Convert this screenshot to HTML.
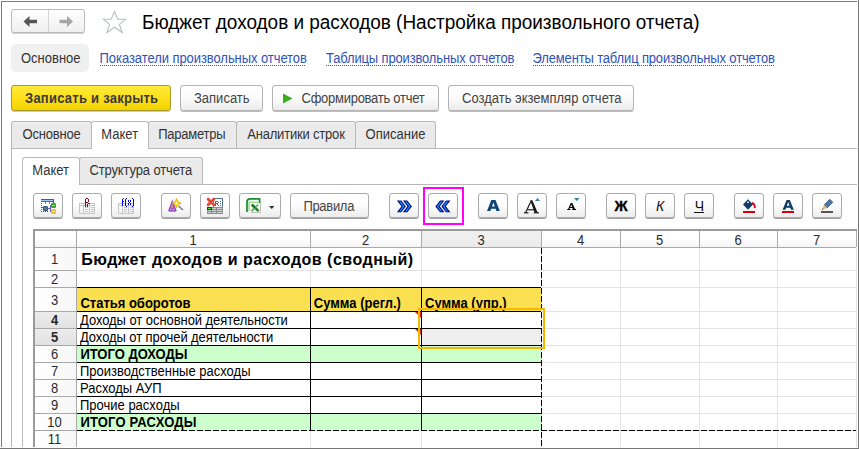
<!DOCTYPE html>
<html><head><meta charset="utf-8"><style>
html,body{margin:0;padding:0;}
body{width:859px;height:449px;position:relative;overflow:hidden;background:#fff;font-family:"Liberation Sans",sans-serif;}
.t{position:absolute;white-space:nowrap;}
</style></head><body>
<div style="position:absolute;left:1px;top:1px;width:856px;height:1px;background:#7b7b7b;"></div>
<div style="position:absolute;left:1px;top:1px;width:1px;height:446px;background:#7b7b7b;"></div>
<div style="position:absolute;left:858px;top:0px;width:1px;height:449px;background:#777;"></div>
<div style="position:absolute;left:0px;top:448px;width:859px;height:1px;background:#777;"></div>
<div style="position:absolute;left:11px;top:9px;width:74px;height:24px;box-sizing:border-box;border:1px solid #b9b9b9;border-radius:3px;background:linear-gradient(#fefefe,#f0f0f0);box-shadow:0 1px 0 #d0d0d0;"></div>
<div style="position:absolute;left:48px;top:10px;width:1px;height:22px;background:#d4d4d4;"></div>
<svg style="position:absolute;left:0;top:0" width="859" height="60"><path d="M23.5 21.5 L29.5 16 V19.8 H37 V23.2 H29.5 V27 Z" fill="#555"/><path d="M73 21.5 L67 16 V19.8 H59.5 V23.2 H67 V27 Z" fill="#a6a6a6"/><path d="M114.5 11.5 L117.8 19.3 L125.6 19.3 L119.4 24.4 L122.2 32.5 L114.5 27.2 L106.8 32.5 L109.6 24.4 L103.4 19.3 L111.2 19.3 Z" fill="none" stroke="#b9bfc6" stroke-width="1.1"/></svg>
<div class="t" style="left:142px;top:13px;font-size:19px;line-height:19px;color:#000;font-weight:400;transform:scaleY(1.08);transform-origin:0 16px;letter-spacing:-0.03px;">Бюджет доходов и расходов (Настройка произвольного отчета)</div>
<div style="position:absolute;left:11px;top:44px;width:78px;height:28px;background:#f0f0f0;border-radius:5px;"></div>
<div class="t" style="left:21px;top:52px;font-size:13px;line-height:13px;color:#333;font-weight:400;transform:scaleY(1.1);transform-origin:0 11px;">Основное</div>
<div class="t" style="left:99.6px;top:52px;font-size:13px;line-height:13px;color:#2f52b8;font-weight:400;transform:scaleY(1.1);transform-origin:0 11px;letter-spacing:-0.07px;">Показатели произвольных отчетов</div>
<div style="position:absolute;left:99.6px;top:65px;width:206px;height:1px;background:repeating-linear-gradient(90deg,#2f52b8 0 1px,transparent 1px 2px);"></div>
<div class="t" style="left:326px;top:52px;font-size:13px;line-height:13px;color:#2f52b8;font-weight:400;transform:scaleY(1.1);transform-origin:0 11px;letter-spacing:-0.15px;">Таблицы произвольных отчетов</div>
<div style="position:absolute;left:326px;top:65px;width:187px;height:1px;background:repeating-linear-gradient(90deg,#2f52b8 0 1px,transparent 1px 2px);"></div>
<div class="t" style="left:532.5px;top:52px;font-size:13px;line-height:13px;color:#2f52b8;font-weight:400;transform:scaleY(1.1);transform-origin:0 11px;letter-spacing:-0.15px;">Элементы таблиц произвольных отчетов</div>
<div style="position:absolute;left:532.5px;top:65px;width:241px;height:1px;background:repeating-linear-gradient(90deg,#2f52b8 0 1px,transparent 1px 2px);"></div>
<div style="position:absolute;left:11px;top:85px;width:160px;height:26px;box-sizing:border-box;border:1px solid #a99a2a;border-radius:3px;background:linear-gradient(#ffea3a 0%,#ffe01a 50%,#f2d200 100%);box-shadow:0 1px 0 #c9c9c9;"></div>
<div class="t" style="left:25px;top:92px;font-size:13px;line-height:13px;color:#3a3a3a;font-weight:700;transform:scaleY(1.1);transform-origin:0 11px;letter-spacing:0.25px;">Записать и закрыть</div>
<div style="position:absolute;left:180px;top:85px;width:83px;height:26px;box-sizing:border-box;border:1px solid #b3b3b3;border-radius:3px;background:linear-gradient(#ffffff 0%,#fbfbfb 50%,#ececec 100%);box-shadow:0 1px 0 #bdbdbd;"></div>
<div class="t" style="left:194px;top:92px;font-size:13px;line-height:13px;color:#444;font-weight:400;transform:scaleY(1.1);transform-origin:0 11px;">Записать</div>
<div style="position:absolute;left:272px;top:85px;width:167px;height:26px;box-sizing:border-box;border:1px solid #b3b3b3;border-radius:3px;background:linear-gradient(#ffffff 0%,#fbfbfb 50%,#ececec 100%);box-shadow:0 1px 0 #bdbdbd;"></div>
<svg style="position:absolute;left:282px;top:93px" width="12" height="12"><path d="M1 0.5 L10.5 5.5 L1 10.5 Z" fill="#3cae1e"/></svg>
<div class="t" style="left:301.5px;top:92px;font-size:13px;line-height:13px;color:#444;font-weight:400;transform:scaleY(1.1);transform-origin:0 11px;letter-spacing:-0.26px;">Сформировать отчет</div>
<div style="position:absolute;left:448px;top:85px;width:186px;height:26px;box-sizing:border-box;border:1px solid #b3b3b3;border-radius:3px;background:linear-gradient(#ffffff 0%,#fbfbfb 50%,#ececec 100%);box-shadow:0 1px 0 #bdbdbd;"></div>
<div class="t" style="left:462px;top:92px;font-size:13px;line-height:13px;color:#444;font-weight:400;transform:scaleY(1.1);transform-origin:0 11px;">Создать экземпляр отчета</div>
<div style="position:absolute;left:11px;top:148px;width:846px;height:1px;background:#b9b9b9;"></div>
<div style="position:absolute;left:11px;top:121px;width:81px;height:27px;box-sizing:border-box;border:1px solid #b9b9b9;border-bottom:none;border-radius:3px 3px 0 0;background:linear-gradient(#f1f1f1 0,#eaeaea 3px);"></div>
<div class="t" style="left:22.5px;top:128px;font-size:13px;line-height:13px;color:#333;font-weight:400;transform:scaleY(1.1);transform-origin:0 11px;letter-spacing:-0.18px;">Основное</div>
<div style="position:absolute;left:148px;top:121px;width:89px;height:27px;box-sizing:border-box;border:1px solid #b9b9b9;border-bottom:none;border-radius:3px 3px 0 0;background:linear-gradient(#f1f1f1 0,#eaeaea 3px);"></div>
<div class="t" style="left:158.2px;top:128px;font-size:13px;line-height:13px;color:#333;font-weight:400;transform:scaleY(1.1);transform-origin:0 11px;letter-spacing:-0.24px;">Параметры</div>
<div style="position:absolute;left:236px;top:121px;width:120px;height:27px;box-sizing:border-box;border:1px solid #b9b9b9;border-bottom:none;border-radius:3px 3px 0 0;background:linear-gradient(#f1f1f1 0,#eaeaea 3px);"></div>
<div class="t" style="left:247.2px;top:128px;font-size:13px;line-height:13px;color:#333;font-weight:400;transform:scaleY(1.1);transform-origin:0 11px;letter-spacing:-0.19px;">Аналитики строк</div>
<div style="position:absolute;left:355px;top:121px;width:81px;height:27px;box-sizing:border-box;border:1px solid #b9b9b9;border-bottom:none;border-radius:3px 3px 0 0;background:linear-gradient(#f1f1f1 0,#eaeaea 3px);"></div>
<div class="t" style="left:365.6px;top:128px;font-size:13px;line-height:13px;color:#333;font-weight:400;transform:scaleY(1.1);transform-origin:0 11px;letter-spacing:0px;">Описание</div>
<div style="position:absolute;left:91px;top:121px;width:58px;height:28px;box-sizing:border-box;border:1px solid #b9b9b9;border-bottom:none;border-radius:3px 3px 0 0;background:#ffffff;"></div>
<div class="t" style="left:101.3px;top:128px;font-size:13px;line-height:13px;color:#333;font-weight:400;transform:scaleY(1.1);transform-origin:0 11px;letter-spacing:0px;">Макет</div>
<div style="position:absolute;left:11px;top:148px;width:1px;height:299px;background:#b9b9b9;"></div>
<div style="position:absolute;left:22px;top:184px;width:835px;height:1px;background:#b9b9b9;"></div>
<div style="position:absolute;left:79px;top:157px;width:124px;height:27px;box-sizing:border-box;border:1px solid #b9b9b9;border-bottom:none;border-radius:3px 3px 0 0;background:linear-gradient(#f1f1f1 0,#eaeaea 3px);"></div>
<div class="t" style="left:89.4px;top:164px;font-size:13px;line-height:13px;color:#333;font-weight:400;transform:scaleY(1.1);transform-origin:0 11px;letter-spacing:-0.13px;">Структура отчета</div>
<div style="position:absolute;left:22px;top:157px;width:58px;height:28px;box-sizing:border-box;border:1px solid #b9b9b9;border-bottom:none;border-radius:3px 3px 0 0;background:#ffffff;"></div>
<div class="t" style="left:32.2px;top:164px;font-size:13px;line-height:13px;color:#333;font-weight:400;transform:scaleY(1.1);transform-origin:0 11px;letter-spacing:0px;">Макет</div>
<div style="position:absolute;left:22px;top:184px;width:1px;height:263px;background:#b9b9b9;"></div>
<div style="position:absolute;left:33px;top:193px;width:30px;height:25px;box-sizing:border-box;border:1px solid #ababab;border-radius:3px;background:linear-gradient(#ffffff 0%,#fdfdfd 45%,#ededed 100%);box-shadow:0 1px 0 #9f9f9f;"></div>
<div style="position:absolute;left:72px;top:193px;width:30px;height:25px;box-sizing:border-box;border:1px solid #ababab;border-radius:3px;background:linear-gradient(#ffffff 0%,#fdfdfd 45%,#ededed 100%);box-shadow:0 1px 0 #9f9f9f;"></div>
<div style="position:absolute;left:111px;top:193px;width:30px;height:25px;box-sizing:border-box;border:1px solid #ababab;border-radius:3px;background:linear-gradient(#ffffff 0%,#fdfdfd 45%,#ededed 100%);box-shadow:0 1px 0 #9f9f9f;"></div>
<div style="position:absolute;left:161px;top:193px;width:30px;height:25px;box-sizing:border-box;border:1px solid #ababab;border-radius:3px;background:linear-gradient(#ffffff 0%,#fdfdfd 45%,#ededed 100%);box-shadow:0 1px 0 #9f9f9f;"></div>
<div style="position:absolute;left:200px;top:193px;width:30px;height:25px;box-sizing:border-box;border:1px solid #ababab;border-radius:3px;background:linear-gradient(#ffffff 0%,#fdfdfd 45%,#ededed 100%);box-shadow:0 1px 0 #9f9f9f;"></div>
<div style="position:absolute;left:239px;top:193px;width:42px;height:25px;box-sizing:border-box;border:1px solid #ababab;border-radius:3px;background:linear-gradient(#ffffff 0%,#fdfdfd 45%,#ededed 100%);box-shadow:0 1px 0 #9f9f9f;"></div>
<div style="position:absolute;left:290px;top:193px;width:79px;height:25px;box-sizing:border-box;border:1px solid #ababab;border-radius:3px;background:linear-gradient(#ffffff 0%,#fdfdfd 45%,#ededed 100%);box-shadow:0 1px 0 #9f9f9f;"></div>
<div style="position:absolute;left:389px;top:193px;width:30px;height:25px;box-sizing:border-box;border:1px solid #ababab;border-radius:3px;background:linear-gradient(#ffffff 0%,#fdfdfd 45%,#ededed 100%);box-shadow:0 1px 0 #9f9f9f;"></div>
<div style="position:absolute;left:428px;top:193px;width:30px;height:25px;box-sizing:border-box;border:1px solid #ababab;border-radius:3px;background:linear-gradient(#ffffff 0%,#fdfdfd 45%,#ededed 100%);box-shadow:0 1px 0 #9f9f9f;"></div>
<div style="position:absolute;left:478px;top:193px;width:30px;height:25px;box-sizing:border-box;border:1px solid #ababab;border-radius:3px;background:linear-gradient(#ffffff 0%,#fdfdfd 45%,#ededed 100%);box-shadow:0 1px 0 #9f9f9f;"></div>
<div style="position:absolute;left:517px;top:193px;width:30px;height:25px;box-sizing:border-box;border:1px solid #ababab;border-radius:3px;background:linear-gradient(#ffffff 0%,#fdfdfd 45%,#ededed 100%);box-shadow:0 1px 0 #9f9f9f;"></div>
<div style="position:absolute;left:556px;top:193px;width:30px;height:25px;box-sizing:border-box;border:1px solid #ababab;border-radius:3px;background:linear-gradient(#ffffff 0%,#fdfdfd 45%,#ededed 100%);box-shadow:0 1px 0 #9f9f9f;"></div>
<div style="position:absolute;left:606px;top:193px;width:30px;height:25px;box-sizing:border-box;border:1px solid #ababab;border-radius:3px;background:linear-gradient(#ffffff 0%,#fdfdfd 45%,#ededed 100%);box-shadow:0 1px 0 #9f9f9f;"></div>
<div style="position:absolute;left:645px;top:193px;width:30px;height:25px;box-sizing:border-box;border:1px solid #ababab;border-radius:3px;background:linear-gradient(#ffffff 0%,#fdfdfd 45%,#ededed 100%);box-shadow:0 1px 0 #9f9f9f;"></div>
<div style="position:absolute;left:684px;top:193px;width:30px;height:25px;box-sizing:border-box;border:1px solid #ababab;border-radius:3px;background:linear-gradient(#ffffff 0%,#fdfdfd 45%,#ededed 100%);box-shadow:0 1px 0 #9f9f9f;"></div>
<div style="position:absolute;left:734px;top:193px;width:30px;height:25px;box-sizing:border-box;border:1px solid #ababab;border-radius:3px;background:linear-gradient(#ffffff 0%,#fdfdfd 45%,#ededed 100%);box-shadow:0 1px 0 #9f9f9f;"></div>
<div style="position:absolute;left:773px;top:193px;width:30px;height:25px;box-sizing:border-box;border:1px solid #ababab;border-radius:3px;background:linear-gradient(#ffffff 0%,#fdfdfd 45%,#ededed 100%);box-shadow:0 1px 0 #9f9f9f;"></div>
<div style="position:absolute;left:812px;top:193px;width:30px;height:25px;box-sizing:border-box;border:1px solid #ababab;border-radius:3px;background:linear-gradient(#ffffff 0%,#fdfdfd 45%,#ededed 100%);box-shadow:0 1px 0 #9f9f9f;"></div>
<div class="t" style="left:303.4px;top:200px;font-size:13px;line-height:13px;color:#444;font-weight:400;transform:scaleY(1.1);transform-origin:0 11px;letter-spacing:-0.3px;">Правила</div>
<div style="position:absolute;left:423px;top:187px;width:41px;height:38px;box-sizing:border-box;border:2px solid #ff00ff;"></div>

<svg style="position:absolute;left:0;top:190px" width="859" height="30" viewBox="0 190 859 30">
 <!-- icon1 -->
 <g shape-rendering="crispEdges">
  <rect x="41" y="199" width="13" height="1" fill="#5a5a5a"/>
  <rect x="41" y="200" width="13" height="1" fill="#9cc8f2"/>
  <rect x="41" y="201" width="13" height="1" fill="#6a6a6a"/>
  <rect x="53" y="199" width="1" height="4" fill="#555"/>
  <rect x="45" y="202" width="1" height="2" fill="#888"/>
  <rect x="49" y="202" width="1" height="2" fill="#888"/>
  <rect x="41" y="203" width="1" height="1" fill="#555"/><rect x="41" y="205" width="1" height="1" fill="#555"/><rect x="41" y="207" width="1" height="1" fill="#447"/><rect x="41" y="209" width="1" height="1" fill="#444"/><rect x="41" y="211" width="1" height="1" fill="#555"/>
  <rect x="43" y="211" width="1" height="1" fill="#444"/><rect x="45" y="211" width="1" height="1" fill="#444"/><rect x="47" y="211" width="1" height="1" fill="#444"/>
  <rect x="48" y="208" width="2" height="1" fill="#6060d0"/>
  <rect x="50" y="205" width="1" height="7" fill="#6060d0"/>
  <rect x="42" y="207" width="1" height="1" fill="#6060d0"/>
 </g>
 <rect x="43" y="206" width="5" height="5" rx="1.2" fill="#3b5f80"/>
 <rect x="44.5" y="207.5" width="2" height="2" fill="#7a8a8a"/>
 <rect x="51" y="203" width="5" height="5" rx="1.2" fill="#36a82a"/>
 <rect x="52" y="205" width="3" height="1" fill="#9ad08a"/>
 <rect x="51" y="209" width="5" height="5" rx="1.2" fill="#e3c23a"/>
 <rect x="52" y="211" width="3" height="1" fill="#f0dc9a"/>
 <!-- icon2 table + Pr -->
 <g fill="none" stroke="#c6c6c6" stroke-width="1" shape-rendering="crispEdges">
  <rect x="79.5" y="203.5" width="15" height="10"/>
  <path d="M79.5 205.5 H94.5 M83.5 203.5 V213.5 M89.5 203.5 V213.5 M85 207.5 H88 M85 209.5 H88 M85 211.5 H88 M91 207.5 H94 M91 209.5 H94 M91 211.5 H94"/>
 </g>
 <rect x="80" y="204" width="3" height="1" fill="#fff"/><rect x="84" y="204" width="5" height="1" fill="#fff"/><rect x="90" y="204" width="4" height="1" fill="#fff"/>
 <g fill="#8b0a1a" shape-rendering="crispEdges">
  <rect x="85" y="199" width="1" height="8"/>
  <rect x="86" y="198" width="2" height="1"/>
  <rect x="88" y="199" width="1" height="3"/>
  <rect x="86" y="202" width="2" height="1"/>
  <rect x="87" y="204" width="1" height="3"/>
  <rect x="88" y="203" width="2" height="1"/>
 </g>
 <!-- icon3 table + f(x) -->
 <g fill="none" stroke="#c6c6c6" stroke-width="1" shape-rendering="crispEdges">
  <rect x="118.5" y="203.5" width="15" height="10"/>
  <path d="M118.5 205.5 H133.5 M122.5 203.5 V213.5 M128.5 203.5 V213.5 M124 207.5 H127 M124 209.5 H127 M124 211.5 H127 M130 207.5 H133 M130 209.5 H133 M130 211.5 H133"/>
 </g>
 <g fill="#0000ff" shape-rendering="crispEdges">
  <rect x="122" y="199" width="1" height="7"/><rect x="123" y="198" width="1" height="1"/><rect x="123" y="201" width="1" height="1"/>
  <rect x="125" y="199" width="1" height="7"/><rect x="126" y="198" width="1" height="1"/><rect x="126" y="206" width="1" height="1"/>
  <rect x="128" y="200" width="1" height="2"/><rect x="130" y="200" width="1" height="2"/><rect x="129" y="202" width="1" height="1"/><rect x="128" y="203" width="1" height="2"/><rect x="130" y="203" width="1" height="2"/>
  <rect x="133" y="199" width="1" height="7"/><rect x="132" y="198" width="1" height="1"/><rect x="132" y="206" width="1" height="1"/>
 </g>
 <!-- icon4 wizard -->
 <defs><linearGradient id="hat" x1="0" x2="1"><stop offset="0" stop-color="#7a1ec0"/><stop offset="0.5" stop-color="#b070e0"/><stop offset="1" stop-color="#6a10b0"/></linearGradient></defs>
 <path d="M172.3 199 L176.6 211 Q172.5 213 168.2 211 Z" fill="url(#hat)"/>
 <circle cx="170.5" cy="209.5" r="0.7" fill="#f0c800"/><circle cx="172.5" cy="207" r="0.7" fill="#f0c800"/><circle cx="174.5" cy="209.5" r="0.7" fill="#f0c800"/><circle cx="171" cy="206" r="0.6" fill="#f0c800"/><circle cx="173.5" cy="211" r="0.6" fill="#f0c800"/>
 <path d="M178.5 206 L183 210" stroke="#6a7390" stroke-width="1.3"/>
 <path d="M176.6 198.6 L178 201.8 L181.2 203.2 L178 204.6 L176.6 207.8 L175.2 204.6 L172 203.2 L175.2 201.8 Z" fill="#f8e400" stroke="#e09a00" stroke-width="0.7"/>
 <circle cx="176.6" cy="203.2" r="1" fill="#fff"/>
 <!-- icon5 -->
 <rect x="213.5" y="198.5" width="9" height="9" fill="#fff" stroke="#4f7090" stroke-width="1"/>
 <g fill="#52667a" shape-rendering="crispEdges">
  <rect x="215" y="201" width="1" height="5"/><rect x="216" y="201" width="2" height="1"/><rect x="218" y="202" width="1" height="1"/><rect x="216" y="203" width="2" height="1"/><rect x="217" y="204" width="1" height="1"/><rect x="218" y="205" width="1" height="1"/>
  <rect x="220" y="201" width="1" height="1"/><rect x="220" y="203" width="1" height="1"/><rect x="220" y="205" width="1" height="1"/>
 </g>
 <g shape-rendering="crispEdges">
  <rect x="207" y="207" width="16" height="7" fill="#8c8c8c"/>
  <rect x="212" y="208" width="4" height="1" fill="#d2d2d2"/><rect x="217" y="208" width="5" height="1" fill="#d2d2d2"/>
  <rect x="208" y="210" width="3" height="1" fill="#d2d2d2"/><rect x="212" y="210" width="4" height="1" fill="#d2d2d2"/><rect x="217" y="210" width="5" height="1" fill="#d2d2d2"/>
  <rect x="208" y="212" width="3" height="1" fill="#d2d2d2"/><rect x="212" y="212" width="4" height="1" fill="#d2d2d2"/><rect x="217" y="212" width="5" height="1" fill="#d2d2d2"/>
  <rect x="207" y="207" width="5" height="3" fill="#333"/>
  <rect x="208" y="208" width="3" height="1" fill="#55e03a"/>
 </g>
 <path d="M208.2 199.2 L213.8 204.8 M213.8 199.2 L208.2 204.8" stroke="#e04a36" stroke-width="3" stroke-linecap="round"/>
 <!-- icon6 excel -->
 <path d="M248.3 201.5 H258.5 V203.5 H250 V211 H248.3 Z" fill="#a6dca6"/>
 <path d="M247 212 V202 Q247 198.8 250.2 198.8 H259.6 V204" stroke="#1a8a2a" stroke-width="1.7" fill="none"/>
 <rect x="251" y="204" width="10" height="9" fill="#bdbdbd"/>
 <rect x="250" y="203" width="10" height="9" fill="#fbfdfb"/>
 <path d="M251.8 204.6 L258.6 211.2" stroke="#237a23" stroke-width="2.4"/>
 <path d="M258.2 204.6 L251.4 211.2" stroke="#62c062" stroke-width="2"/>
 <path d="M251.8 204.6 L255.2 207.9" stroke="#237a23" stroke-width="2.4"/>
 <path d="M269 206 H274.5 L271.75 209 Z" fill="#333"/>
 <!-- >> -->
 <path d="M398 201 H401 L405.2 206.4 L401 211.8 H398 L402.2 206.4 Z M404 201 H407 L411.2 206.4 L407 211.8 H404 L408.2 206.4 Z" fill="#1590ff" stroke="#00087a" stroke-width="1.1" stroke-linejoin="miter"/>
 <!-- << -->
 <path d="M449.3 201 H446.3 L442.1 206.4 L446.3 211.8 H449.3 L445.1 206.4 Z M443.3 201 H440.3 L436.1 206.4 L440.3 211.8 H443.3 L439.1 206.4 Z" fill="#1590ff" stroke="#00087a" stroke-width="1.1" stroke-linejoin="miter"/>
 <!-- A bold -->
 <path d="M487 211 L491.3 200 H495.5 L499.8 211 H496.4 L495.6 208.8 H491.2 L490.4 211 Z M492 206.4 H494.8 L493.4 202.6 Z" fill="#0f4677" fill-rule="evenodd"/>
 <!-- A+ -->
 <path d="M530.2 200.3 H532.3 L537.6 212.6 H534.6 Z" fill="#151515"/>
 <path d="M530.9 201.5 L525.6 212.6" stroke="#151515" stroke-width="1.1"/>
 <rect x="527.3" y="209.2" width="8" height="1.1" fill="#151515"/>
 <rect x="524" y="212.2" width="4.4" height="1.2" fill="#151515"/>
 <rect x="533.8" y="212.2" width="5" height="1.2" fill="#151515"/>
 <path d="M535 201 L537.5 198 L540 201 Z" fill="#2d7ea0"/>
 <!-- A- -->
 <path d="M570.6 203 H572.3 L575.2 209.2 H572.9 Z" fill="#000"/>
 <path d="M571.2 203.6 L568.6 209.2" stroke="#000" stroke-width="1.1"/>
 <rect x="569.3" y="207" width="4.4" height="1" fill="#000"/>
 <rect x="567.2" y="209" width="3.2" height="1" fill="#000"/>
 <rect x="572.2" y="209" width="3.8" height="1" fill="#000"/>
 <path d="M574 198 H579.5 L576.75 201 Z" fill="#2d7ea0"/>
 <!-- Ж К Ч -->
 <text x="614.4" y="211" font-family="Liberation Sans" font-size="14.5" font-weight="700" fill="#000" stroke="#000" stroke-width="0.3">Ж</text>
 <text x="656" y="211" font-family="Liberation Sans" font-size="14" font-style="italic" fill="#111">К</text>
 <text x="694.8" y="211" font-family="Liberation Sans" font-size="14" fill="#111">Ч</text>
 <rect x="694" y="212" width="10" height="1" fill="#111"/>
 <!-- fill -->
 <path d="M748 199.2 L753 204.5 L748 209.8 L743 204.5 Z" fill="#0f3d66"/>
 <circle cx="748" cy="202.2" r="1" fill="#cfe0ee"/>
 <path d="M748 198 V200" stroke="#b0c8d8" stroke-width="0.8"/>
 <path d="M751.8 203 Q755.2 203.6 754.8 208.2" stroke="#d40010" stroke-width="1.8" fill="none"/>
 <rect x="743" y="211" width="12" height="2" fill="#d40010"/>
 <!-- font color A -->
 <path d="M782.6 209.8 L786.6 200 H789.8 L793.8 209.8 H791 L790.3 207.8 H786.1 L785.4 209.8 Z M786.8 205.8 H789.6 L788.2 202 Z" fill="#0f3d66" fill-rule="evenodd"/>
 <rect x="782" y="211" width="12" height="2" fill="#d40010"/>
 <!-- pencil -->
 <path d="M824.3 204.8 L829.8 199.3 L832.8 202.3 L827.3 207.8 Z" fill="#4a7aa6" stroke="#1f3f66" stroke-width="0.7"/>
 <path d="M824.3 204.8 L827.3 207.8 L822 209.8 Z" fill="#e2b060"/>
 <path d="M822 209.8 L823.3 208.6" stroke="#333" stroke-width="0.8"/>
 <rect x="821" y="211" width="12" height="2" fill="#555"/>
</svg>
<div style="position:absolute;left:33px;top:229px;width:824px;height:2px;background:#9a9a9a;"></div>
<div style="position:absolute;left:33px;top:229px;width:2px;height:218px;background:#9a9a9a;"></div>
<div style="position:absolute;left:856px;top:231px;width:1px;height:16px;background:#aaa;"></div>
<div style="position:absolute;left:856px;top:248px;width:1px;height:199px;background:#e2e2e2;"></div>
<div style="position:absolute;left:35px;top:231px;width:821px;height:16px;background:linear-gradient(#ffffff 40%,#f6f6f6);"></div>
<div style="position:absolute;left:422px;top:231px;width:119px;height:16px;background:linear-gradient(#f1f1f1,#ebebeb);"></div>
<div style="position:absolute;left:35px;top:248px;width:41px;height:199px;background:linear-gradient(90deg,#ffffff,#f7f7f7);"></div>
<div style="position:absolute;left:35px;top:312px;width:41px;height:16px;background:linear-gradient(#ececec,#e2e2e2);"></div>
<div style="position:absolute;left:35px;top:329px;width:41px;height:16px;background:linear-gradient(#ececec,#e2e2e2);"></div>
<div style="position:absolute;left:35px;top:247px;width:821px;height:1px;background:#a9a9a9;"></div>
<div style="position:absolute;left:76px;top:231px;width:1px;height:16px;background:#a9a9a9;"></div>
<div style="position:absolute;left:310px;top:231px;width:1px;height:16px;background:#a9a9a9;"></div>
<div style="position:absolute;left:421px;top:231px;width:1px;height:16px;background:#a9a9a9;"></div>
<div style="position:absolute;left:541px;top:231px;width:1px;height:16px;background:#a9a9a9;"></div>
<div style="position:absolute;left:620px;top:231px;width:1px;height:16px;background:#a9a9a9;"></div>
<div style="position:absolute;left:699px;top:231px;width:1px;height:16px;background:#a9a9a9;"></div>
<div style="position:absolute;left:777px;top:231px;width:1px;height:16px;background:#a9a9a9;"></div>
<div style="position:absolute;left:76px;top:248px;width:1px;height:199px;background:#a9a9a9;"></div>
<div style="position:absolute;left:35px;top:270px;width:41px;height:1px;background:#a9a9a9;"></div>
<div style="position:absolute;left:35px;top:287px;width:41px;height:1px;background:#a9a9a9;"></div>
<div style="position:absolute;left:35px;top:311px;width:41px;height:1px;background:#a9a9a9;"></div>
<div style="position:absolute;left:35px;top:328px;width:41px;height:1px;background:#a9a9a9;"></div>
<div style="position:absolute;left:35px;top:345px;width:41px;height:1px;background:#a9a9a9;"></div>
<div style="position:absolute;left:35px;top:362px;width:41px;height:1px;background:#a9a9a9;"></div>
<div style="position:absolute;left:35px;top:379px;width:41px;height:1px;background:#a9a9a9;"></div>
<div style="position:absolute;left:35px;top:396px;width:41px;height:1px;background:#a9a9a9;"></div>
<div style="position:absolute;left:35px;top:413px;width:41px;height:1px;background:#a9a9a9;"></div>
<div style="position:absolute;left:35px;top:430px;width:41px;height:1px;background:#a9a9a9;"></div>
<div style="position:absolute;left:77px;top:270px;width:779px;height:1px;background:#e3e3e3;"></div>
<div style="position:absolute;left:77px;top:287px;width:779px;height:1px;background:#e3e3e3;"></div>
<div style="position:absolute;left:77px;top:311px;width:779px;height:1px;background:#e3e3e3;"></div>
<div style="position:absolute;left:77px;top:328px;width:779px;height:1px;background:#e3e3e3;"></div>
<div style="position:absolute;left:77px;top:345px;width:779px;height:1px;background:#e3e3e3;"></div>
<div style="position:absolute;left:77px;top:362px;width:779px;height:1px;background:#e3e3e3;"></div>
<div style="position:absolute;left:77px;top:379px;width:779px;height:1px;background:#e3e3e3;"></div>
<div style="position:absolute;left:77px;top:396px;width:779px;height:1px;background:#e3e3e3;"></div>
<div style="position:absolute;left:77px;top:413px;width:779px;height:1px;background:#e3e3e3;"></div>
<div style="position:absolute;left:77px;top:430px;width:779px;height:1px;background:#e3e3e3;"></div>
<div style="position:absolute;left:310px;top:248px;width:1px;height:199px;background:#e3e3e3;"></div>
<div style="position:absolute;left:421px;top:248px;width:1px;height:199px;background:#e3e3e3;"></div>
<div style="position:absolute;left:541px;top:248px;width:1px;height:199px;background:#e3e3e3;"></div>
<div style="position:absolute;left:620px;top:248px;width:1px;height:199px;background:#e3e3e3;"></div>
<div style="position:absolute;left:699px;top:248px;width:1px;height:199px;background:#e3e3e3;"></div>
<div style="position:absolute;left:777px;top:248px;width:1px;height:199px;background:#e3e3e3;"></div>
<div class="t" style="left:76px;top:234px;width:234px;text-align:center;font-size:13px;line-height:13px;color:#2a2a2a;transform:scaleY(1.1);transform-origin:0 11px;">1</div>
<div class="t" style="left:310px;top:234px;width:111px;text-align:center;font-size:13px;line-height:13px;color:#2a2a2a;transform:scaleY(1.1);transform-origin:0 11px;">2</div>
<div class="t" style="left:421px;top:234px;width:120px;text-align:center;font-size:13px;line-height:13px;color:#2a2a2a;transform:scaleY(1.1);transform-origin:0 11px;">3</div>
<div class="t" style="left:541px;top:234px;width:79px;text-align:center;font-size:13px;line-height:13px;color:#2a2a2a;transform:scaleY(1.1);transform-origin:0 11px;">4</div>
<div class="t" style="left:620px;top:234px;width:79px;text-align:center;font-size:13px;line-height:13px;color:#2a2a2a;transform:scaleY(1.1);transform-origin:0 11px;">5</div>
<div class="t" style="left:699px;top:234px;width:78px;text-align:center;font-size:13px;line-height:13px;color:#2a2a2a;transform:scaleY(1.1);transform-origin:0 11px;">6</div>
<div class="t" style="left:777px;top:234px;width:79px;text-align:center;font-size:13px;line-height:13px;color:#2a2a2a;transform:scaleY(1.1);transform-origin:0 11px;">7</div>
<div class="t" style="left:35px;top:253px;width:41px;text-align:center;font-size:13px;line-height:13px;color:#2a2a2a;font-weight:400;margin-left:-1px;transform:scaleY(1.1);transform-origin:0 11px;">1</div>
<div class="t" style="left:35px;top:273px;width:41px;text-align:center;font-size:13px;line-height:13px;color:#2a2a2a;font-weight:400;margin-left:-1px;transform:scaleY(1.1);transform-origin:0 11px;">2</div>
<div class="t" style="left:35px;top:294px;width:41px;text-align:center;font-size:13px;line-height:13px;color:#2a2a2a;font-weight:400;margin-left:-1px;transform:scaleY(1.1);transform-origin:0 11px;">3</div>
<div class="t" style="left:35px;top:314px;width:41px;text-align:center;font-size:13px;line-height:13px;color:#2a2a2a;font-weight:700;margin-left:-1px;transform:scaleY(1.1);transform-origin:0 11px;">4</div>
<div class="t" style="left:35px;top:331px;width:41px;text-align:center;font-size:13px;line-height:13px;color:#2a2a2a;font-weight:700;margin-left:-1px;transform:scaleY(1.1);transform-origin:0 11px;">5</div>
<div class="t" style="left:35px;top:348px;width:41px;text-align:center;font-size:13px;line-height:13px;color:#2a2a2a;font-weight:400;margin-left:-1px;transform:scaleY(1.1);transform-origin:0 11px;">6</div>
<div class="t" style="left:35px;top:365px;width:41px;text-align:center;font-size:13px;line-height:13px;color:#2a2a2a;font-weight:400;margin-left:-1px;transform:scaleY(1.1);transform-origin:0 11px;">7</div>
<div class="t" style="left:35px;top:382px;width:41px;text-align:center;font-size:13px;line-height:13px;color:#2a2a2a;font-weight:400;margin-left:-1px;transform:scaleY(1.1);transform-origin:0 11px;">8</div>
<div class="t" style="left:35px;top:399px;width:41px;text-align:center;font-size:13px;line-height:13px;color:#2a2a2a;font-weight:400;margin-left:-1px;transform:scaleY(1.1);transform-origin:0 11px;">9</div>
<div class="t" style="left:35px;top:416px;width:41px;text-align:center;font-size:13px;line-height:13px;color:#2a2a2a;font-weight:400;margin-left:-1px;transform:scaleY(1.1);transform-origin:0 11px;">10</div>
<div class="t" style="left:35px;top:433px;width:41px;text-align:center;font-size:13px;line-height:13px;color:#2a2a2a;font-weight:400;margin-left:-1px;transform:scaleY(1.1);transform-origin:0 11px;">11</div>
<div style="position:absolute;left:77px;top:288px;width:464px;height:23px;background:#fadf50;"></div>
<div style="position:absolute;left:77px;top:346px;width:464px;height:16px;background:#ccffcc;"></div>
<div style="position:absolute;left:77px;top:414px;width:464px;height:16px;background:#ccffcc;"></div>
<div style="position:absolute;left:422px;top:329px;width:119px;height:16px;background:#efefef;"></div>
<div style="position:absolute;left:77px;top:287px;width:464px;height:1px;background:#000;"></div>
<div style="position:absolute;left:77px;top:311px;width:464px;height:1px;background:#000;"></div>
<div style="position:absolute;left:77px;top:328px;width:464px;height:1px;background:#000;"></div>
<div style="position:absolute;left:77px;top:345px;width:464px;height:1px;background:#000;"></div>
<div style="position:absolute;left:77px;top:362px;width:464px;height:1px;background:#000;"></div>
<div style="position:absolute;left:77px;top:379px;width:464px;height:1px;background:#000;"></div>
<div style="position:absolute;left:77px;top:396px;width:464px;height:1px;background:#000;"></div>
<div style="position:absolute;left:77px;top:413px;width:464px;height:1px;background:#000;"></div>
<div style="position:absolute;left:310px;top:287px;width:1px;height:143px;background:#000;"></div>
<div style="position:absolute;left:421px;top:287px;width:1px;height:143px;background:#000;"></div>
<div style="position:absolute;left:541px;top:248px;width:1px;height:199px;background:repeating-linear-gradient(180deg,#000 0 6px,transparent 6px 8px);"></div>
<div style="position:absolute;left:77px;top:430px;width:779px;height:1px;background:repeating-linear-gradient(90deg,#000 0 6px,transparent 6px 8px);"></div>
<svg style="position:absolute;left:413px;top:311px" width="9" height="40"><path d="M2 1 H8 V7 Z" fill="#e02020"/><path d="M2 18 H8 V24 Z" fill="#e02020"/></svg>
<div class="t" style="left:81.2px;top:252px;font-size:16px;line-height:16px;color:#000;font-weight:700;letter-spacing:0.5px;">Бюджет доходов и расходов (сводный)</div>
<div class="t" style="left:80.4px;top:297px;font-size:13px;line-height:13px;color:#000;font-weight:700;transform:scaleY(1.1);transform-origin:0 11px;">Статья оборотов</div>
<div class="t" style="left:313.8px;top:297px;font-size:13px;line-height:13px;color:#000;font-weight:700;transform:scaleY(1.1);transform-origin:0 11px;">Сумма (регл.)</div>
<div class="t" style="left:425px;top:297px;font-size:13px;line-height:13px;color:#000;font-weight:700;transform:scaleY(1.1);transform-origin:0 11px;">Сумма (упр.)</div>
<div class="t" style="left:80px;top:314px;font-size:13px;line-height:13px;color:#000;font-weight:400;transform:scaleY(1.1);transform-origin:0 11px;letter-spacing:-0.06px;">Доходы от основной деятельности</div>
<div class="t" style="left:80px;top:331px;font-size:13px;line-height:13px;color:#000;font-weight:400;transform:scaleY(1.1);transform-origin:0 11px;letter-spacing:-0.08px;">Доходы от прочей деятельности</div>
<div class="t" style="left:80.4px;top:348px;font-size:13px;line-height:13px;color:#000;font-weight:700;transform:scaleY(1.1);transform-origin:0 11px;">ИТОГО ДОХОДЫ</div>
<div class="t" style="left:80px;top:365px;font-size:13px;line-height:13px;color:#000;font-weight:400;transform:scaleY(1.1);transform-origin:0 11px;">Производственные расходы</div>
<div class="t" style="left:80px;top:382px;font-size:13px;line-height:13px;color:#000;font-weight:400;transform:scaleY(1.1);transform-origin:0 11px;">Расходы АУП</div>
<div class="t" style="left:80px;top:399px;font-size:13px;line-height:13px;color:#000;font-weight:400;transform:scaleY(1.1);transform-origin:0 11px;">Прочие расходы</div>
<div class="t" style="left:80.4px;top:416px;font-size:13px;line-height:13px;color:#000;font-weight:700;transform:scaleY(1.1);transform-origin:0 11px;letter-spacing:0.2px;">ИТОГО РАСХОДЫ</div>
<div style="position:absolute;left:418px;top:308px;width:127px;height:41px;box-sizing:border-box;border:2px solid #f5b700;"></div>
</body></html>
